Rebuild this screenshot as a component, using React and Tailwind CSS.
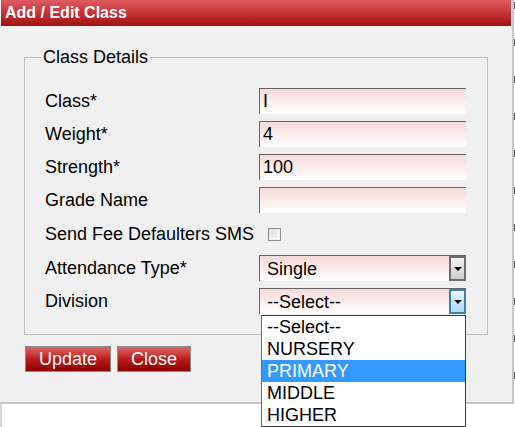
import React from 'react';

const font = "font-['Liberation_Sans',Arial,sans-serif]";

function TextBox({ value }) {
  return (
    <input
      readOnly
      value={value}
      className="h-[26px] w-[207px] border-t border-l border-[#646464] bg-linear-to-b from-[#f7dada] to-white px-[3px] text-[18px] leading-[20px] text-black outline-none"
    />
  );
}

function Arrow({ active }) {
  return (
    <div
      className={
        active
          ? 'flex h-full w-[17px] items-center justify-center border-2 border-[#3c7fb1] bg-linear-to-b from-[#eaf6fd] to-[#a9daf5]'
          : 'flex h-full w-[17px] items-center justify-center border-2 border-[#6e6e6e] bg-linear-to-b from-[#f2f2f2] to-[#cdcdcd]'
      }
    >
      <div className="h-0 w-0 border-x-[4px] border-t-[4px] border-x-transparent border-t-black" />
    </div>
  );
}

function SelectBox({ value, active, children }) {
  return (
    <div className="relative h-[26px] w-[207px]">
      <div className="flex h-full w-full items-stretch border-t border-l border-[#646464] bg-linear-to-b from-[#f7dada] to-white">
        <div className="flex flex-1 items-center pl-[7px] text-[18px] text-black">{value}</div>
        <Arrow active={active} />
      </div>
      {children}
    </div>
  );
}

const options = ['--Select--', 'NURSERY', 'PRIMARY', 'MIDDLE', 'HIGHER'];

function DropList() {
  return (
    <div className="absolute left-[2px] top-[27px] z-10 w-[205px] border border-[#3a3a3a] border-l-[#6a6a6a] bg-white">
      {options.map((o) => (
        <div
          key={o}
          className={
            o === 'PRIMARY'
              ? 'flex h-[22px] items-center bg-[#3399ff] pl-[5px] text-[18px] text-white'
              : 'flex h-[22px] items-center pl-[5px] text-[18px] text-black'
          }
        >
          {o}
        </div>
      ))}
    </div>
  );
}

function RedButton({ label, width }) {
  return (
    <button
      type="button"
      className={`h-[26px] ${width} border border-[#8e8e8e] bg-linear-to-b from-[#e06266] via-[#b81c1c] to-[#8c0000] text-[18px] leading-none text-white`}
    >
      {label}
    </button>
  );
}

export default function App() {
  return (
    <div className={`relative h-[427px] w-[515px] overflow-hidden bg-white leading-[20px] ${font}`}>
      <div className="flex">
        <div className="w-[514px] border-r-2 border-b-2 border-[#c6c6c6] bg-[#f0f0f0]">
          <div className="mx-[1px] flex h-[26px] items-center bg-linear-to-b from-[#e05c60] via-[#c53236] to-[#a01010] pl-[4px] text-[16px] font-bold text-white">
            Add / Edit Class
          </div>
          <div className="px-[24px] pt-[21px] pb-[30px]">
            <fieldset className="border border-[#c0c0c0] pl-[20px] pt-[21px] pb-[20px]">
              <legend className="-ml-[4px] px-[2px] text-[18px] leading-[20px] text-black">Class Details</legend>
              <div className="grid grid-cols-[214px_207px] items-center gap-y-[7px] text-[18px] leading-[20px] text-black">
                <div>Class*</div>
                <TextBox value="I" />
                <div>Weight*</div>
                <TextBox value="4" />
                <div>Strength*</div>
                <TextBox value="100" />
                <div>Grade Name</div>
                <TextBox value="" />
                <div className="flex h-[28px] items-center">Send Fee Defaulters SMS</div>
                <div className="flex h-[28px] items-center pl-[9px]">
                  <div className="h-[13px] w-[13px] border border-[#8f8f8f] bg-linear-to-br from-[#d8d8d8] to-[#f8f8f8] p-[1px]">
                    <div className="h-full w-full border border-white/70" />
                  </div>
                </div>
                <div>Attendance Type*</div>
                <SelectBox value="Single" />
                <div>Division</div>
                <SelectBox value="--Select--" active>
                  <DropList />
                </SelectBox>
              </div>
            </fieldset>
            <div className="mt-[11px] flex gap-[6px] pl-[1px]">
              <RedButton label="Update" width="w-[86px]" />
              <RedButton label="Close" width="w-[74px]" />
            </div>
          </div>
        </div>
        <div className="w-[1px] bg-[repeating-linear-gradient(to_bottom,transparent_0px,transparent_2px,#555_2px,#555_9px,transparent_9px,transparent_37px)]" />
      </div>
      <div className="h-full w-[3px] border-l-2 border-[#d6d6d6]" />
    </div>
  );
}
